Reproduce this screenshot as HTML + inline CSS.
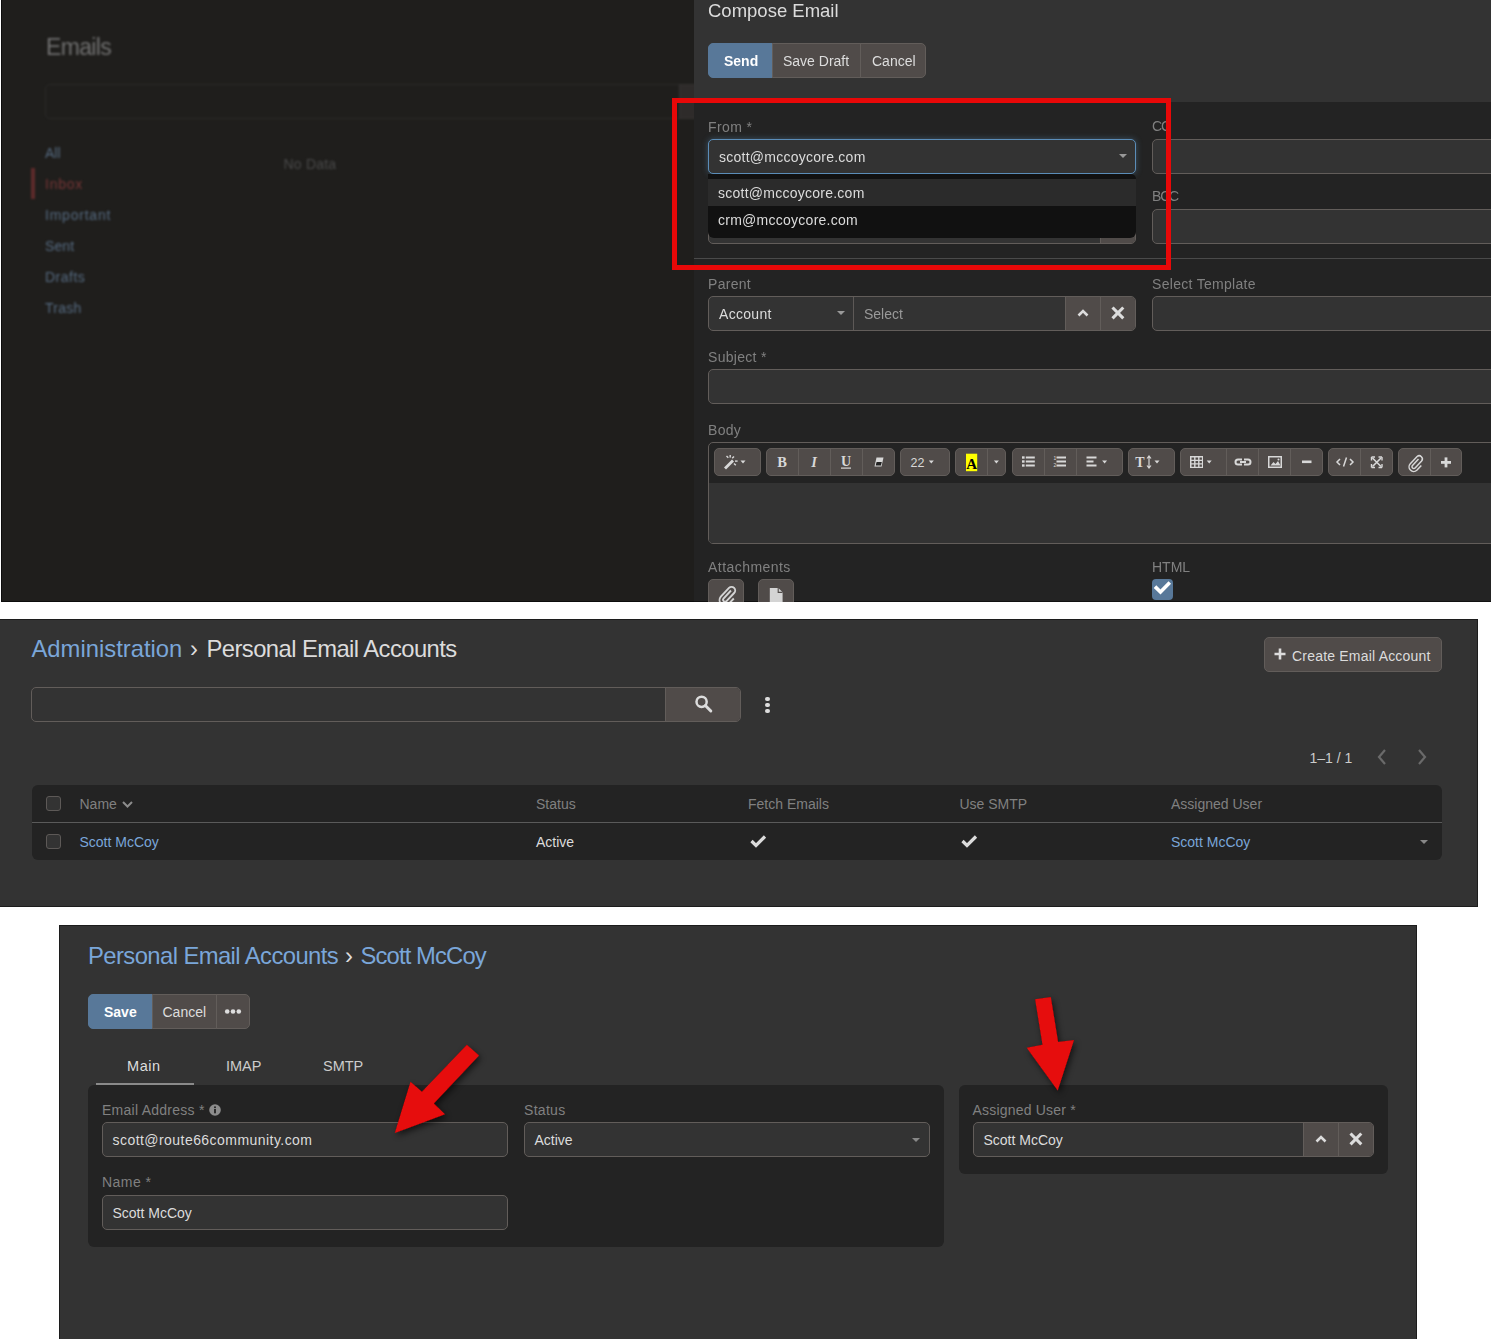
<!DOCTYPE html>
<html><head><meta charset="utf-8">
<style>
*{box-sizing:border-box}
html,body{margin:0;padding:0}
body{width:1491px;height:1339px;background:#fff;position:relative;overflow:hidden;font-family:"Liberation Sans",sans-serif;color:#ddd}
.a{position:absolute}
.t{position:absolute;line-height:1;white-space:nowrap}
.sec{position:absolute;background:#333;border:1px solid #1c1c1c;overflow:hidden}
.lbl{color:#808080;font-size:14px}
.inp{position:absolute;background:#333;border:1px solid #625d5a;border-radius:5px}
.btn{position:absolute;background:#504b49;border:1px solid #625d5a}
.pbtn{position:absolute;background:#587899;border:1px solid #587899}
.link{color:#7aa6d9}
.g{will-change:transform}
.pan{position:absolute;background:#232323;border-radius:6px}
</style></head><body>

<!-- ============ TOP SECTION ============ -->
<div class="a" style="left:0;top:0;width:1px;height:602px;background:#fff"></div>
<div class="a" style="left:1px;top:0;width:693px;height:602px;background:#1f1e1c;border-left:1px solid #0c0c0c;border-bottom:1px solid #0c0c0c;overflow:hidden"><div class="a" style="left:0;top:0;width:693px;height:601px;filter:blur(0.8px)">
  <div class="t" style="left:44px;top:36px;font-size:23px;color:#707070;letter-spacing:-0.65px">Emails</div>
  <div class="a" style="left:43px;top:84px;width:640px;height:35px;border:1px solid #2c2b2a;border-radius:5px;background:#1f1e1c"></div>
  <div class="a" style="left:677px;top:84px;width:20px;height:35px;background:#2e2b2a;border-left:1px solid #353231;border-top:1px solid #353231;border-bottom:1px solid #353231"></div>
  <div class="t" style="left:43px;top:146px;font-size:14px;color:#566b82">All</div>
  <div class="a" style="left:29px;top:168px;width:4px;height:31px;background:#5e2b2b"></div>
  <div class="t" style="left:43px;top:176.5px;font-size:14px;color:#773636;letter-spacing:0.76px">Inbox</div>
  <div class="t" style="left:43px;top:208px;font-size:14px;color:#566b82;letter-spacing:0.78px">Important</div>
  <div class="t" style="left:43px;top:239px;font-size:14px;color:#566b82;letter-spacing:0.1px">Sent</div>
  <div class="t" style="left:43px;top:270px;font-size:14px;color:#566b82;letter-spacing:0.5px">Drafts</div>
  <div class="t" style="left:43px;top:301px;font-size:14px;color:#566b82;letter-spacing:0.26px">Trash</div>
  <div class="t" style="left:281.5px;top:156.5px;font-size:14px;color:#4a4a4a;letter-spacing:0.2px">No Data</div>
</div></div>

<!-- modal -->
<div class="a" style="left:694px;top:0;width:797px;height:102px;background:#333"></div>
<div class="a" style="left:694px;top:102px;width:797px;height:500px;background:#232323;border-bottom:1px solid #111"></div>
<div class="t g" style="left:708px;top:1.5px;font-size:18.5px;color:#dcdcdc">Compose Email</div>

<div class="pbtn" style="left:708px;top:43px;width:65px;height:35px;border-radius:5px 0 0 5px"></div>
<div class="btn" style="left:772px;top:43px;width:89px;height:35px"></div>
<div class="btn" style="left:860px;top:43px;width:66px;height:35px;border-radius:0 5px 5px 0"></div>
<div class="t g" style="left:724px;top:53.5px;font-size:14px;font-weight:bold;color:#fff">Send</div>
<div class="t g" style="left:783px;top:53.5px;font-size:14px;color:#ddd">Save Draft</div>
<div class="t g" style="left:872px;top:53.5px;font-size:14px;color:#ddd">Cancel</div>

<!-- From -->
<div class="t g lbl" style="left:708px;top:119.6px;font-size:14px;letter-spacing:0.4px">From *</div>
<!-- underlying To field (bottom) -->
<div class="inp" style="left:708px;top:209px;width:428px;height:35px;border-radius:5px"></div>
<div class="a" style="left:1100px;top:210px;width:35px;height:33px;background:#504b49;border-left:1px solid #625d5a;border-radius:0 4px 4px 0"></div>
<div class="inp" style="left:708px;top:139px;width:428px;height:35px;border-color:#5b8db8;box-shadow:0 0 6px rgba(91,141,184,0.45)"></div>
<div class="t g" style="left:719px;top:150px;font-size:14px;color:#dcdcdc;letter-spacing:0.25px">scott@mccoycore.com</div>
<div class="a" style="left:1119px;top:154px;width:0;height:0;border-left:4px solid transparent;border-right:4px solid transparent;border-top:4px solid #999"></div>
<!-- dropdown -->
<div class="a" style="left:708px;top:174px;width:428px;height:64px;background:#111;border-radius:0 5px 6px 6px;overflow:hidden">
  <div class="a" style="left:0;top:5px;width:428px;height:27px;background:#2b2b2b"></div>
</div>
<div class="t g" style="left:718px;top:186px;font-size:14px;color:#dcdcdc;letter-spacing:0.25px">scott@mccoycore.com</div>
<div class="t g" style="left:718px;top:213px;font-size:14px;color:#dcdcdc;letter-spacing:0.26px">crm@mccoycore.com</div>

<!-- CC/BCC -->
<div class="t g lbl" style="left:1152px;top:118.6px;font-size:14px;letter-spacing:-1.2px">CC</div>
<div class="inp" style="left:1152px;top:139px;width:400px;height:35px"></div>
<div class="t g lbl" style="left:1152px;top:188.6px;font-size:14px;letter-spacing:-1.2px">BCC</div>
<div class="inp" style="left:1152px;top:209px;width:400px;height:35px"></div>
<div class="a" style="left:694px;top:258px;width:797px;height:1px;background:#4a4a4a"></div>

<!-- red box -->
<div class="a" style="left:672px;top:98px;width:499px;height:172px;border:5px solid #e80808"></div>

<!-- Parent -->
<div class="t g lbl" style="left:708px;top:276.6px;font-size:14px;letter-spacing:0.3px">Parent</div>
<div class="inp" style="left:708px;top:296px;width:428px;height:35px"></div>
<div class="a" style="left:853px;top:297px;width:1px;height:33px;background:#5d5957"></div>
<div class="t g" style="left:719px;top:307px;font-size:14px;color:#dcdcdc;letter-spacing:0.3px">Account</div>
<div class="a" style="left:837px;top:311px;width:0;height:0;border-left:4px solid transparent;border-right:4px solid transparent;border-top:4px solid #999"></div>
<div class="t g" style="left:864px;top:307px;font-size:14px;color:#9a9a9a">Select</div>
<div class="a" style="left:1065px;top:297px;width:70px;height:33px;background:#504b49;border-left:1px solid #625d5a;border-radius:0 4px 4px 0"></div>
<div class="a" style="left:1100px;top:297px;width:1px;height:33px;background:#625d5a"></div>
<svg class="a" style="left:1076px;top:306px" width="14" height="14" viewBox="0 0 14 14"><path d="M2.5 9.5 L7 5 L11.5 9.5" stroke="#dcdcdc" stroke-width="2.6" fill="none"/></svg>
<svg class="a" style="left:1111px;top:306px" width="14" height="14" viewBox="0 0 14 14"><path d="M1.5 1.5 L12.3 12.3 M12.3 1.5 L1.5 12.3" stroke="#dcdcdc" stroke-width="3.1" fill="none"/></svg>
<div class="t g lbl" style="left:1152px;top:276.6px;font-size:14px;letter-spacing:0.3px">Select Template</div>
<div class="inp" style="left:1152px;top:296px;width:400px;height:35px"></div>

<!-- Subject -->
<div class="t g lbl" style="left:708px;top:349.6px;font-size:14px;letter-spacing:0.3px">Subject *</div>
<div class="inp" style="left:708px;top:369px;width:850px;height:35px"></div>

<!-- Body -->
<div class="t g lbl" style="left:708px;top:422.6px;font-size:14px;letter-spacing:0.3px">Body</div>
<div class="inp" style="left:708px;top:442px;width:850px;height:102px;background:#232323;overflow:hidden">
  <div class="a" style="left:0;top:40px;width:850px;height:70px;background:#333"></div>
</div>
<div id="tb">
<div class="btn" style="left:714px;top:448px;width:47px;height:28px;border-radius:5px"></div>
<div class="btn" style="left:766px;top:448px;width:129px;height:28px;border-radius:5px"></div>
<div class="a" style="left:798px;top:449px;width:1px;height:26px;background:#625d5a"></div>
<div class="a" style="left:830px;top:449px;width:1px;height:26px;background:#625d5a"></div>
<div class="a" style="left:862px;top:449px;width:1px;height:26px;background:#625d5a"></div>
<div class="btn" style="left:900px;top:448px;width:50px;height:28px;border-radius:5px"></div>
<div class="btn" style="left:955px;top:448px;width:51px;height:28px;border-radius:5px"></div>
<div class="a" style="left:987px;top:449px;width:1px;height:26px;background:#625d5a"></div>
<div class="btn" style="left:1012px;top:448px;width:111px;height:28px;border-radius:5px"></div>
<div class="a" style="left:1044px;top:449px;width:1px;height:26px;background:#625d5a"></div>
<div class="a" style="left:1076px;top:449px;width:1px;height:26px;background:#625d5a"></div>
<div class="btn" style="left:1128px;top:448px;width:47px;height:28px;border-radius:5px"></div>
<div class="btn" style="left:1180px;top:448px;width:143px;height:28px;border-radius:5px"></div>
<div class="a" style="left:1226px;top:449px;width:1px;height:26px;background:#625d5a"></div>
<div class="a" style="left:1258px;top:449px;width:1px;height:26px;background:#625d5a"></div>
<div class="a" style="left:1290px;top:449px;width:1px;height:26px;background:#625d5a"></div>
<div class="btn" style="left:1328px;top:448px;width:65px;height:28px;border-radius:5px"></div>
<div class="a" style="left:1360px;top:449px;width:1px;height:26px;background:#625d5a"></div>
<div class="btn" style="left:1398px;top:448px;width:64px;height:28px;border-radius:5px"></div>
<div class="a" style="left:1430px;top:449px;width:1px;height:26px;background:#625d5a"></div>
<svg class="a" style="left:714px;top:448px" width="760" height="28" viewBox="714 448 760 28">
 <g fill="#d8d8d8" stroke="none">
  <!-- wand -->
  <path d="M724 467.5 L732 459.5 L734 461.5 L726 469.5 Z"/>
  <rect x="729.5" y="455" width="1.4" height="2.6"/><rect x="735" y="460.4" width="2.6" height="1.4"/>
  <path d="M726 456.5 l1 -1 l1.8 1.8 l-1 1 Z M733.5 456 l1 1 l-1.8 1.8 l-1 -1 Z M733.5 464 l1 -1 l1.8 1.8 l-1 1 Z"/>
  <!-- carets -->
  <path d="M740.5 460.5 h5 l-2.5 3 Z M928.8 460.5 h5 l-2.5 3 Z M993.9 460.5 h5 l-2.5 3 Z M1102.1 460.5 h5 l-2.5 3 Z M1154.5 460.5 h5 l-2.5 3 Z M1206.7 460.5 h5 l-2.5 3 Z"/>
  <!-- ul -->
  <rect x="1022" y="456.3" width="2.6" height="2.4"/><rect x="1025.8" y="456.5" width="9" height="2"/>
  <rect x="1022" y="460.3" width="2.6" height="2.4"/><rect x="1025.8" y="460.5" width="9" height="2"/>
  <rect x="1022" y="464.3" width="2.6" height="2.4"/><rect x="1025.8" y="464.5" width="9" height="2"/>
  <!-- ol -->
  <rect x="1056.5" y="456.5" width="9.5" height="2"/><rect x="1056.5" y="460.5" width="9.5" height="2"/><rect x="1056.5" y="464.5" width="9.5" height="2"/>
  <text x="1055" y="459.5" font-family="Liberation Sans" font-size="5" text-anchor="middle">1</text><text x="1055" y="467" font-family="Liberation Sans" font-size="5" text-anchor="middle">2</text>
  <!-- align -->
  <rect x="1086.5" y="456.5" width="10" height="2"/><rect x="1086.5" y="460.5" width="7" height="2"/><rect x="1086.5" y="464.5" width="10" height="2"/>
  <!-- link -->
  <path d="M1238 458.5 h4 v2 h-4 a1.5 1.5 0 0 0 0 3 h4 v2 h-4 a3.5 3.5 0 0 1 0 -7 Z M1244 458.5 h4 a3.5 3.5 0 0 1 0 7 h-4 v-2 h4 a1.5 1.5 0 0 0 0 -3 h-4 Z M1240 461 h6 v2 h-6 Z"/>
  <!-- minus -->
  <rect x="1302" y="460.5" width="9.5" height="2.6"/>
  <!-- plus -->
  <rect x="1441" y="461" width="10" height="2.8"/><rect x="1444.6" y="457.4" width="2.8" height="10"/>
  <!-- table -->
  <path d="M1190 456 h13 v12 h-13 Z M1191.5 457.5 v2.2 h2.6 v-2.2 Z M1195.5 457.5 v2.2 h2.6 v-2.2 Z M1199.5 457.5 v2.2 h2.4 v-2.2 Z M1191.5 461 v2.2 h2.6 v-2.2 Z M1195.5 461 v2.2 h2.6 v-2.2 Z M1199.5 461 v2.2 h2.4 v-2.2 Z M1191.5 464.5 v2.2 h2.6 v-2.2 Z M1195.5 464.5 v2.2 h2.6 v-2.2 Z M1199.5 464.5 v2.2 h2.4 v-2.2 Z" fill-rule="evenodd"/>
  <!-- image -->
  <path d="M1268 456 h14 v12 h-14 Z M1269.5 457.5 v9 h11 v-9 Z" fill-rule="evenodd"/>
  <path d="M1270.5 465.5 l3 -3.5 l2 2 l2.5 -3 l2.5 4.5 Z"/><circle cx="1278.5" cy="459.5" r="1"/>
  <!-- eraser -->
  <path d="M874.5 466.5 l2 -9 h7 l-2 9 Z" />
 </g>
 <g fill="#232323"><path d="M875.7 465.5 l0.9 -3.5 h5.2 l-0.9 3.5 Z"/></g>
 <g stroke="#d8d8d8" fill="none">
  <!-- code -->
  <path d="M1340 459 l-3 3 l3 3 M1350 459 l3 3 l-3 3 M1346.5 457.5 l-3 9" stroke-width="1.5"/>
  <!-- fullscreen -->
  <path d="M1372.5 458 l8.5 8.5 M1381 458 l-8.5 8.5" stroke-width="1.6"/>
  <path d="M1371.5 457 h3.5 M1371.5 457 v3.5 M1382 457 h-3.5 M1382 457 v3.5 M1371.5 467.5 h3.5 M1371.5 467.5 v-3.5 M1382 467.5 h-3.5 M1382 467.5 v-3.5" stroke-width="1.4"/>
  <!-- paperclip -->
  <path d="M1418.5 459 l-6 6.5 a1.8 1.8 0 0 0 2.6 2.5 l6.5 -7 a3.2 3.2 0 0 0 -4.5 -4.5 l-6.8 7.2 a4.6 4.6 0 0 0 6.5 6.5 l4.5 -4.8" stroke-width="1.5"/>
 </g>
 <rect x="966" y="453.7" width="11.2" height="17.5" fill="#ffff00"/>
 <text x="971.6" y="468.5" font-family="Liberation Serif" font-weight="bold" font-size="15" fill="#000" text-anchor="middle">A</text>
 <text x="782" y="467" font-family="Liberation Serif" font-weight="bold" font-size="14.5" fill="#d8d8d8" text-anchor="middle">B</text>
 <text x="814" y="467" font-family="Liberation Serif" font-weight="bold" font-style="italic" font-size="14.5" fill="#d8d8d8" text-anchor="middle">I</text>
 <text x="846" y="466" font-family="Liberation Serif" font-weight="bold" font-size="14" fill="#d8d8d8" text-anchor="middle">U</text>
 <rect x="841" y="467.5" width="10" height="1.2" fill="#d8d8d8"/>
 <text x="917.5" y="467" font-family="Liberation Sans" font-size="12.5" fill="#d8d8d8" text-anchor="middle">22</text>
 <text x="1140" y="467" font-family="Liberation Serif" font-weight="bold" font-size="14" fill="#d8d8d8" text-anchor="middle">T</text>
 <path d="M1149 456.5 v11 M1147 458.5 l2 -2.5 l2 2.5 M1147 465.5 l2 2.5 l2 -2.5" stroke="#d8d8d8" stroke-width="1.2" fill="none"/>
</svg>
</div>


<!-- Attachments / HTML -->
<div class="t g lbl" style="left:708px;top:559.6px;font-size:14px;letter-spacing:0.45px">Attachments</div>
<div class="btn" style="left:708px;top:579px;width:36px;height:34px;border-radius:5px"></div>
<div class="btn" style="left:758px;top:579px;width:36px;height:34px;border-radius:5px"></div>
<svg class="a" style="left:708px;top:579px" width="90" height="23" viewBox="708 579 90 23">
 <path d="M731 590.5 l-7.5 8 a2 2 0 0 0 2.8 2.8 l7.8 -8.3 a3.6 3.6 0 0 0 -5.1 -5.1 l-8.2 8.7 a5.4 5.4 0 0 0 7.6 7.6 l5.4 -5.7" stroke="#d4d4d4" stroke-width="1.9" fill="none"/>
 <path d="M769.8 588 h8.6 l4.2 4.2 v10 h-12.8 Z" fill="#d4d4d4"/>
 <path d="M778.2 588 v4.4 h4.4" stroke="#504b49" stroke-width="1.1" fill="none"/>
</svg>
<div class="t g lbl" style="left:1152px;top:559.6px;font-size:14px;letter-spacing:0px">HTML</div>
<div class="a" style="left:1152px;top:579px;width:21px;height:21px;background:#587899;border-radius:4px"></div>
<svg class="a" style="left:1152px;top:579px" width="21" height="21" viewBox="0 0 21 21"><path d="M3 7.6 L8.5 13 L17.8 3.6" stroke="#fff" stroke-width="3.6" fill="none"/></svg>
<div class="a" style="left:0;top:602px;width:1491px;height:17px;background:#fff"></div>

<!-- ============ MIDDLE SECTION ============ -->
<div class="sec" style="left:0;top:619px;width:1478px;height:288px;border-left:none"></div>
<div class="t link" style="left:31.5px;top:636.7px;font-size:23.8px">Administration</div>
<div class="t" style="left:190px;top:636.7px;font-size:23.8px;color:#ddd">›</div>
<div class="t" style="left:206.5px;top:636.7px;font-size:23.8px;color:#dcdcdc;letter-spacing:-0.57px">Personal Email Accounts</div>
<div class="btn" style="left:1264px;top:637px;width:178px;height:35px;border-radius:5px"></div>
<svg class="a" style="left:1274px;top:648px" width="12" height="12" viewBox="0 0 12 12"><path d="M0.5 4.7h11v2.6h-11z M4.7 0.5h2.6v11h-2.6z" fill="#dcdcdc"/></svg>
<div class="t" style="left:1292px;top:648.5px;font-size:14px;color:#dcdcdc;letter-spacing:0.2px">Create Email Account</div>

<div class="inp" style="left:31px;top:687px;width:710px;height:35px"></div>
<div class="a" style="left:665px;top:688px;width:75px;height:33px;background:#504b49;border-left:1px solid #625d5a;border-radius:0 4px 4px 0"></div>
<svg class="a" style="left:692px;top:692px" width="22" height="22" viewBox="692 692 22 22"><circle cx="701.6" cy="701.8" r="5.1" stroke="#dcdcdc" stroke-width="2.5" fill="none"/><path d="M705.3 705.5 L710.8 711" stroke="#dcdcdc" stroke-width="3" stroke-linecap="round"/></svg>
<div class="a" style="left:765.3px;top:697.1px;width:4.4px;height:4.4px;border-radius:50%;background:#ddd"></div>
<div class="a" style="left:765.3px;top:702.8px;width:4.4px;height:4.4px;border-radius:50%;background:#ddd"></div>
<div class="a" style="left:765.3px;top:708.5px;width:4.4px;height:4.4px;border-radius:50%;background:#ddd"></div>

<div class="t" style="left:1309.5px;top:750.8px;font-size:14px;color:#ccc">1–1 / 1</div>
<svg class="a" style="left:1374px;top:748px" width="16" height="18" viewBox="0 0 16 18"><path d="M11 2 L5 9 L11 16" stroke="#6a6a6a" stroke-width="2.2" fill="none"/></svg>
<svg class="a" style="left:1414px;top:748px" width="16" height="18" viewBox="0 0 16 18"><path d="M5 2 L11 9 L5 16" stroke="#6a6a6a" stroke-width="2.2" fill="none"/></svg>

<div class="pan" style="left:32px;top:785px;width:1410px;height:75px;border-radius:6px"></div>
<div class="a" style="left:32px;top:822px;width:1410px;height:1px;background:#5a5a5a"></div>
<div class="a" style="left:46px;top:796px;width:15px;height:15px;border:1px solid #5d5957;border-radius:3px;background:#333"></div>
<div class="a" style="left:46px;top:834px;width:15px;height:15px;border:1px solid #5d5957;border-radius:3px;background:#333"></div>
<div class="t lbl" style="left:79.5px;top:797.3px;font-size:14px">Name</div>
<svg class="a" style="left:121px;top:799px" width="13" height="10" viewBox="0 0 13 10"><path d="M2 3 L6.5 7.5 L11 3" stroke="#8c8c8c" stroke-width="2" fill="none"/></svg>
<div class="t lbl" style="left:536px;top:797.3px;font-size:14px">Status</div>
<div class="t lbl" style="left:748px;top:797.3px;font-size:14px">Fetch Emails</div>
<div class="t lbl" style="left:959.5px;top:797.3px;font-size:14px">Use SMTP</div>
<div class="t lbl" style="left:1171px;top:797.3px;font-size:14px">Assigned User</div>
<div class="t link" style="left:79.5px;top:834.5px;font-size:14px">Scott McCoy</div>
<div class="t" style="left:536px;top:834.5px;font-size:14px;color:#dcdcdc">Active</div>
<svg class="a" style="left:749px;top:833px" width="19" height="16" viewBox="0 0 19 16"><path d="M2.5 8 L7 12.5 L16 3.5" stroke="#dcdcdc" stroke-width="3.2" fill="none"/></svg>
<svg class="a" style="left:960px;top:833px" width="19" height="16" viewBox="0 0 19 16"><path d="M2.5 8 L7 12.5 L16 3.5" stroke="#dcdcdc" stroke-width="3.2" fill="none"/></svg>
<div class="t link" style="left:1171px;top:834.5px;font-size:14px">Scott McCoy</div>
<div class="a" style="left:1420px;top:840px;width:0;height:0;border-left:4px solid transparent;border-right:4px solid transparent;border-top:4px solid #888"></div>

<!-- ============ BOTTOM SECTION ============ -->
<div class="sec" style="left:59px;top:925px;width:1358px;height:420px"></div>
<div class="t link" style="left:88px;top:944px;font-size:23.8px;letter-spacing:-0.57px">Personal Email Accounts</div>
<div class="t" style="left:345px;top:944px;font-size:23.8px;color:#ddd">›</div>
<div class="t link" style="left:360.5px;top:944px;font-size:23.8px;letter-spacing:-0.87px">Scott McCoy</div>

<div class="pbtn" style="left:88px;top:994px;width:65px;height:35px;border-radius:5px 0 0 5px"></div>
<div class="btn" style="left:152px;top:994px;width:65px;height:35px"></div>
<div class="btn" style="left:216px;top:994px;width:34px;height:35px;border-radius:0 5px 5px 0"></div>
<div class="t" style="left:104px;top:1004.6px;font-size:14px;font-weight:bold;color:#fff">Save</div>
<div class="t" style="left:162.5px;top:1004.6px;font-size:14px;color:#ddd">Cancel</div>
<svg class="a" style="left:224px;top:1008px" width="18" height="7" viewBox="0 0 18 7"><circle cx="3.2" cy="3.5" r="2.3" fill="#ddd"/><circle cx="9" cy="3.5" r="2.3" fill="#ddd"/><circle cx="14.8" cy="3.5" r="2.3" fill="#ddd"/></svg>

<div class="t" style="left:127px;top:1059px;font-size:14.5px;color:#ddd;letter-spacing:0.55px">Main</div>
<div class="t" style="left:226px;top:1059px;font-size:14.5px;color:#ccc">IMAP</div>
<div class="t" style="left:323px;top:1059px;font-size:14.5px;color:#ccc">SMTP</div>
<div class="a" style="left:96px;top:1083px;width:98px;height:2px;background:#8a8a8a"></div>

<div class="pan" style="left:88px;top:1085px;width:856px;height:162px"></div>
<div class="t lbl" style="left:102px;top:1102.9px;font-size:14px;letter-spacing:0.26px">Email Address *</div>
<svg class="a" style="left:208.5px;top:1103.5px" width="12" height="12" viewBox="0 0 12 12"><circle cx="6" cy="6" r="5.8" fill="#8c8c8c"/><rect x="5.1" y="5" width="1.8" height="4.3" fill="#232323"/><circle cx="6" cy="3.2" r="1" fill="#232323"/></svg>
<div class="inp" style="left:102px;top:1122px;width:406px;height:35px"></div>
<div class="t" style="left:112.5px;top:1133.1px;font-size:14px;color:#dcdcdc;letter-spacing:0.45px">scott@route66community.com</div>
<div class="t lbl" style="left:524px;top:1102.9px;font-size:14px;letter-spacing:0.3px">Status</div>
<div class="inp" style="left:524px;top:1122px;width:406px;height:35px"></div>
<div class="t" style="left:534.5px;top:1133.1px;font-size:14px;color:#dcdcdc">Active</div>
<div class="a" style="left:912px;top:1138px;width:0;height:0;border-left:4px solid transparent;border-right:4px solid transparent;border-top:4px solid #888"></div>
<div class="t lbl" style="left:102px;top:1175.4px;font-size:14px;letter-spacing:0.45px">Name *</div>
<div class="inp" style="left:102px;top:1195px;width:406px;height:35px"></div>
<div class="t" style="left:112.5px;top:1206.1px;font-size:14px;color:#dcdcdc">Scott McCoy</div>

<div class="pan" style="left:959px;top:1085px;width:429px;height:89px"></div>
<div class="t lbl" style="left:972.5px;top:1102.5px;font-size:14px;letter-spacing:0.2px">Assigned User *</div>
<div class="inp" style="left:973px;top:1122px;width:401px;height:35px"></div>
<div class="t" style="left:983.5px;top:1133.1px;font-size:14px;color:#dcdcdc">Scott McCoy</div>
<div class="a" style="left:1303px;top:1123px;width:70px;height:33px;background:#504b49;border-left:1px solid #625d5a;border-radius:0 4px 4px 0"></div>
<div class="a" style="left:1338px;top:1123px;width:1px;height:33px;background:#625d5a"></div>
<svg class="a" style="left:1314px;top:1132px" width="14" height="14" viewBox="0 0 14 14"><path d="M2.5 9.5 L7 5 L11.5 9.5" stroke="#dcdcdc" stroke-width="2.6" fill="none"/></svg>
<svg class="a" style="left:1349px;top:1132px" width="14" height="14" viewBox="0 0 14 14"><path d="M1.5 1.5 L12.3 12.3 M12.3 1.5 L1.5 12.3" stroke="#dcdcdc" stroke-width="3.1" fill="none"/></svg>

<!-- arrows -->
<svg class="a" style="left:0;top:0;overflow:visible" width="1491" height="1339" viewBox="0 0 1491 1339">
 <defs><filter id="sh" x="-50%" y="-50%" width="200%" height="200%"><feGaussianBlur in="SourceAlpha" stdDeviation="3"/><feOffset dx="2" dy="3"/><feComponentTransfer><feFuncA type="linear" slope="0.6"/></feComponentTransfer><feMerge><feMergeNode/><feMergeNode in="SourceGraphic"/></feMerge></filter></defs>
 <path filter="url(#sh)" fill="#e60808" d="M466.9 1044.8 L479 1055.5 L433.8 1103.5 L445 1114.2 L394.8 1132.9 L410.5 1081.8 L421.9 1091.8 Z"/>
 <path filter="url(#sh)" fill="#e60808" d="M1035.1 999.2 L1050.8 996.9 L1058.1 1042.1 L1074 1040 L1057.7 1090.6 L1026.7 1047.7 L1042.5 1044.7 Z"/>
</svg>

</body></html>
